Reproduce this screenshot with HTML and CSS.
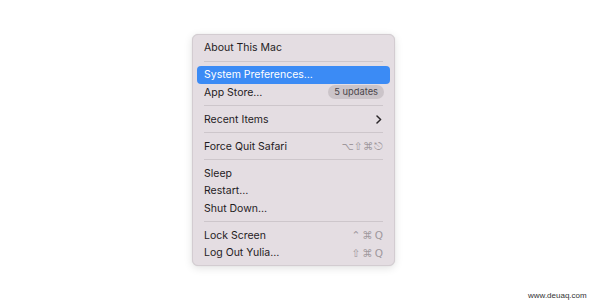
FILE: index.html
```html
<!DOCTYPE html>
<html>
<head>
<meta charset="utf-8">
<link rel="stylesheet" href="styles.css">
</head>
<body>
<div class="stage">
  <div class="menu">
    <div class="item"><span class="label">About This Mac</span></div>
    <div class="sep"></div>
    <div class="item active"><span class="label">System Preferences…</span></div>
    <div class="item"><span class="label">App Store…</span><span class="badge">5 updates</span></div>
    <div class="sep"></div>
    <div class="item"><span class="label">Recent Items</span>
      <svg class="chev" width="6" height="9" viewBox="0 0 6 9"><path d="M1 1 L4.6 4.5 L1 8" fill="none" stroke="#2a2629" stroke-width="1.5" stroke-linecap="round" stroke-linejoin="round"/></svg>
    </div>
    <div class="sep"></div>
    <div class="item"><span class="label">Force Quit Safari</span><span class="keys">⌥⇧⌘⎋</span></div>
    <div class="sep"></div>
    <div class="item"><span class="label">Sleep</span></div>
    <div class="item"><span class="label">Restart…</span></div>
    <div class="item"><span class="label">Shut Down…</span></div>
    <div class="sep"></div>
    <div class="item"><span class="label">Lock Screen</span><span class="keys wide">⌃⌘Q</span></div>
    <div class="item"><span class="label">Log Out Yulia…</span><span class="keys wide">⇧⌘Q</span></div>
  </div>
  <div class="mark">www.deuaq.com</div>
</div>
</body>
</html>
```
FILE: styles.css
```css
html, body {
  margin: 0;
  padding: 0;
  background: #ffffff;
}
.stage {
  width: 608px;
  height: 305px;
  position: relative;
  box-sizing: border-box;
  padding-top: 34px;
  padding-left: 192px;
}
.menu {
  width: 203px;
  height: 232px;
  box-sizing: border-box;
  background: #e4dde2;
  border: 1px solid #d3ccd1;
  border-radius: 6px;
  box-shadow: 0 2px 8px rgba(0,0,0,0.12), 0 0 1px rgba(0,0,0,0.15);
  padding: 4px 4px 4px 4px;
  font-family: "Inter", "Liberation Sans", sans-serif;
  font-size: 10.5px;
  color: #1f1b1e;
}
.item {
  height: 17.5px;
  display: flex;
  align-items: center;
  justify-content: space-between;
  padding: 0 7px;
  border-radius: 4px;
}
.item.active {
  background: #3b8bf5;
  color: #ffffff;
}
.sep {
  height: 9.5px;
  display: flex;
  align-items: center;
  padding: 0 7px;
}
.sep::before {
  content: "";
  flex: 1;
  height: 1px;
  background: #cdc6cb;
}
.badge {
  background: #cbc4c9;
  color: #4a4549;
  font-size: 9.3px;
  height: 14px;
  line-height: 14px;
  padding: 0 6px;
  border-radius: 7px;
  margin-right: -1px;
}
.keys {
  color: #9f989d;
  font-family: "DejaVu Sans", sans-serif;
  font-size: 10.5px;
  letter-spacing: 0.3px;
}
.keys.wide {
  letter-spacing: 2px;
  margin-right: -2px;
}
.chev {
  margin-right: 1px;
}
.mark {
  position: absolute;
  left: 528px;
  top: 291px;
  font-family: "Liberation Sans", sans-serif;
  font-size: 8px;
  color: #333333;
}
```
